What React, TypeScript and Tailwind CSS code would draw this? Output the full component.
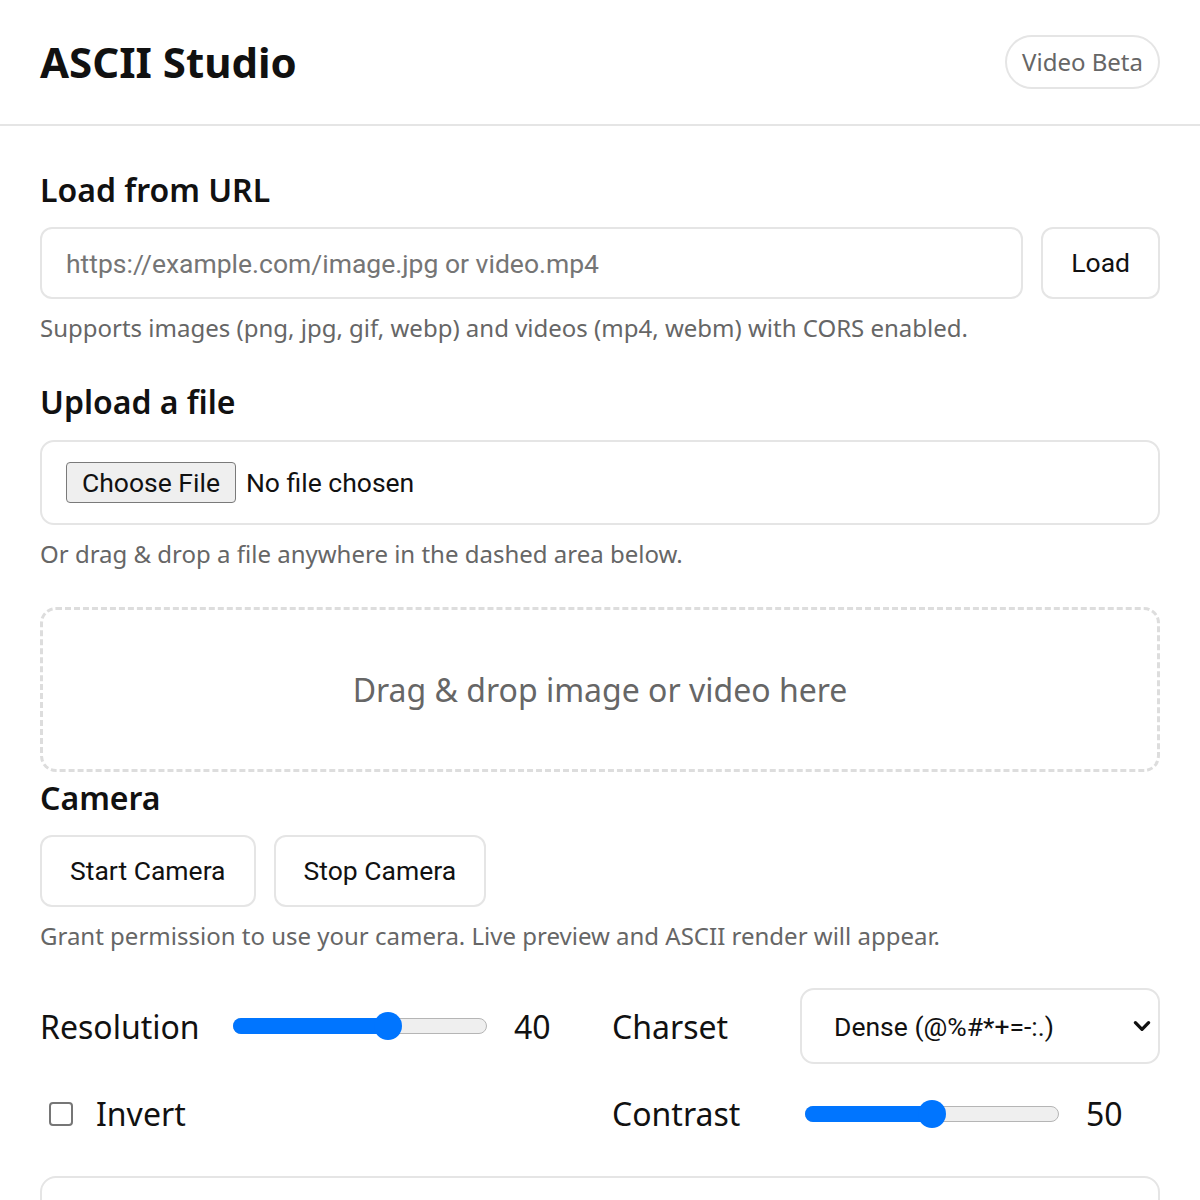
import { useState } from "react";

type Charset = "dense" | "simple" | "blocks";

const CHARSETS: { id: Charset; label: string }[] = [
  { id: "dense", label: "Dense (@%#*+=-:.)" },
  { id: "simple", label: "Simple (#+-.)" },
  { id: "blocks", label: "Blocks (█▓▒░)" },
];

const body = "font-['Noto_Sans',sans-serif]";
const control = "font-['Roboto','Noto_Sans',sans-serif]";

function Slider({ value, min, max }: { value: number; min: number; max: number }) {
  const frac = (value - min) / (max - min);
  const pos = `calc(14px + (100% - 28px) * ${frac})`;
  return (
    <div
      role="slider"
      aria-valuenow={value}
      aria-valuemin={min}
      aria-valuemax={max}
      className="relative mx-[5px] h-[16px] flex-1"
    >
      <div className="h-full rounded-full border-[1.5px] border-[#b5b5b5] bg-[#efefef]" />
      <div className="absolute inset-y-0 left-0 rounded-full bg-[#0075ff]" style={{ width: pos }} />
      <div
        className="absolute top-1/2 h-[28px] w-[28px] -translate-x-1/2 -translate-y-1/2 rounded-full bg-[#0075ff]"
        style={{ left: pos }}
      />
    </div>
  );
}

function OutlineButton({ children }: { children: React.ReactNode }) {
  return (
    <button
      type="button"
      className={`${control} h-[72px] shrink-0 rounded-[12px] border-2 border-[#e5e5e5] bg-white px-[28px] text-[26.5px] text-[#111]`}
    >
      {children}
    </button>
  );
}

function Help({ children }: { children: React.ReactNode }) {
  return <p className="mt-[13px] text-[24px] leading-[32px] text-[#666]">{children}</p>;
}

function Heading({ children, className = "" }: { children: React.ReactNode; className?: string }) {
  return (
    <h2 className={`text-[32px] font-semibold leading-[36px] text-[#111] ${className}`}>{children}</h2>
  );
}

export default function App() {
  const [url, setUrl] = useState("");
  const [charset, setCharset] = useState<Charset>("dense");
  const [invert, setInvert] = useState(false);

  return (
    <div className={`${body} min-h-[1200px] bg-white text-[#111]`}>
      <header className="flex h-[126px] items-center justify-between border-b-2 border-[#e5e5e5] px-10">
        <h1 className="text-[42px] font-bold leading-none">ASCII Studio</h1>
        <span className="flex h-[54px] items-center rounded-full border-2 border-[#e5e5e5] px-[15px] text-[24px] text-[#666]">
          Video Beta
        </span>
      </header>

      <main className="px-10 pt-[46px]">
        {/* URL */}
        <section>
          <Heading className="mb-[19px]">Load from URL</Heading>
          <div className="flex gap-[18px]">
            <input
              value={url}
              onChange={(e) => setUrl(e.target.value)}
              placeholder="https://example.com/image.jpg or video.mp4"
              className={`${control} h-[72px] min-w-0 flex-1 rounded-[12px] border-2 border-[#e5e5e5] px-[24px] text-[26.5px] text-[#111] outline-none placeholder:text-[#757575]`}
            />
            <OutlineButton>Load</OutlineButton>
          </div>
          <Help>Supports images (png, jpg, gif, webp) and videos (mp4, webm) with CORS enabled.</Help>
        </section>

        {/* Upload */}
        <section className="mt-[40px]">
          <Heading className="mb-[20px]">Upload a file</Heading>
          <label className="flex h-[85px] cursor-pointer items-center gap-[10px] rounded-[14px] border-2 border-[#e5e5e5] px-[24px]">
            <input type="file" accept="image/*,video/*" className="hidden" />
            <span
              className={`${control} flex h-[41px] items-center rounded-[4px] border-[1.5px] border-[#7a7a7a] bg-[#efefef] px-[15px] text-[26.5px] text-[#111]`}
            >
              Choose File
            </span>
            <span className={`${control} text-[26.5px] text-[#111]`}>No file chosen</span>
          </label>
          <Help>Or drag &amp; drop a file anywhere in the dashed area below.</Help>
        </section>

        {/* Drop zone */}
        <div className="mt-[37px] flex h-[165px] items-center justify-center rounded-[16px] border-[3px] border-dashed border-[#dddddd] text-[32px] text-[#666]">
          Drag &amp; drop image or video here
        </div>

        {/* Camera */}
        <section className="mt-[8px]">
          <Heading className="mb-[19px]">Camera</Heading>
          <div className="flex gap-[18px]">
            <OutlineButton>Start Camera</OutlineButton>
            <OutlineButton>Stop Camera</OutlineButton>
          </div>
          <Help>Grant permission to use your camera. Live preview and ASCII render will appear.</Help>
        </section>

        {/* Controls */}
        <div className="mt-[36px] grid grid-cols-2 gap-x-6 gap-y-[27px] text-[32px] leading-[45px]">
          <div className="flex items-center gap-6">
            <span className="w-[164px] shrink-0">Resolution</span>
            <Slider value={40} min={10} max={58} />
            <span className="-ml-[2px] w-[74px] shrink-0">40</span>
          </div>

          <div className="flex items-center gap-6">
            <span className="w-[164px] shrink-0">Charset</span>
            <div className="relative flex-1">
              <select
                value={charset}
                onChange={(e) => setCharset(e.target.value as Charset)}
                className={`${control} h-[76px] w-full appearance-none rounded-[14px] border-2 border-[#e5e5e5] bg-white pl-[32px] text-[26.5px] text-[#111] outline-none`}
              >
                {CHARSETS.map((c) => (
                  <option key={c.id} value={c.id}>
                    {c.label}
                  </option>
                ))}
              </select>
              <svg
                viewBox="0 0 16 10"
                className="pointer-events-none absolute right-[9px] top-1/2 h-[11px] w-[18px] -translate-y-1/2"
                fill="none"
                stroke="#111"
                strokeWidth="3"
                strokeLinecap="round"
                strokeLinejoin="round"
              >
                <path d="M2 2l6 6 6-6" />
              </svg>
            </div>
          </div>

          <label className="flex cursor-pointer items-center gap-[23px] pl-[9px]">
            <input
              type="checkbox"
              checked={invert}
              onChange={(e) => setInvert(e.target.checked)}
              className="h-[24px] w-[24px] shrink-0 appearance-none rounded-[4px] border-2 border-[#767676] bg-white checked:border-[#0075ff] checked:bg-[#0075ff]"
            />
            <span>Invert</span>
          </label>

          <div className="flex items-center gap-6">
            <span className="w-[164px] shrink-0">Contrast</span>
            <Slider value={50} min={0} max={100} />
            <span className="-ml-[2px] w-[74px] shrink-0">50</span>
          </div>
        </div>

        {/* Output */}
        <div className="mt-[40px] min-h-[240px] rounded-[16px] border-2 border-[#e5e5e5]" />
      </main>
    </div>
  );
}
